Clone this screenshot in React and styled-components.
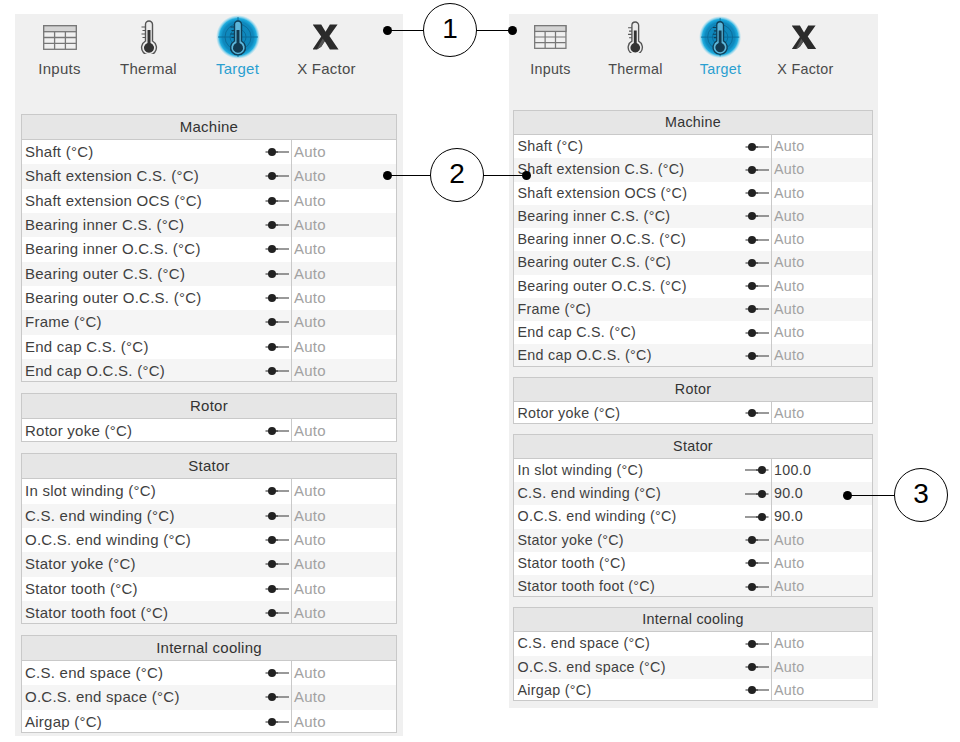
import React from 'react'
import styled, { createGlobalStyle } from 'styled-components'

const SECTIONS = [
  {
    title: 'Machine',
    rows: ['Shaft (°C)', 'Shaft extension C.S. (°C)', 'Shaft extension OCS (°C)', 'Bearing inner C.S. (°C)', 'Bearing inner O.C.S. (°C)', 'Bearing outer C.S. (°C)', 'Bearing outer O.C.S. (°C)', 'Frame (°C)', 'End cap C.S. (°C)', 'End cap O.C.S. (°C)'],
  },
  { title: 'Rotor', rows: ['Rotor yoke (°C)'] },
  {
    title: 'Stator',
    rows: ['In slot winding (°C)', 'C.S. end winding (°C)', 'O.C.S. end winding (°C)', 'Stator yoke (°C)', 'Stator tooth (°C)', 'Stator tooth foot (°C)'],
  },
  { title: 'Internal cooling', rows: ['C.S. end space (°C)', 'O.C.S. end space (°C)', 'Airgap (°C)'] },
]

const LARGE = { panelWidth: 388, tab: 89, tabsHeight: 100, sideL: 6, sideR: 6, gap: 10.8, header: 24, row: 24.33, font: 15, spacing: 0.25, valueCol: 105, bottom: 3, tabsShift: 0, iconScale: 1, labelPad: 3 }
const SMALL = { panelWidth: 369, tab: 85, tabsHeight: 96, sideL: 4, sideR: 5, gap: 10, header: 23, row: 23.25, font: 14.3, spacing: 0.28, valueCol: 101, bottom: 7, tabsShift: -1, iconScale: 0.96, labelPad: 3.5 }

const OVERRIDES = { 'In slot winding (°C)': '100.0', 'C.S. end winding (°C)': '90.0', 'O.C.S. end winding (°C)': '90.0' }

const GlobalStyle = createGlobalStyle`
  html, body {
    margin: 0;
    background: #fff;
  }
  body {
    font-family: "Liberation Sans", Arial, sans-serif;
    color: #333;
  }
`

const Page = styled.div`
  position: relative;
  display: flex;
  align-items: flex-start;
  gap: 106px;
  width: 960px;
  height: 742px;
  padding: 14px 0 0 15px;
  box-sizing: border-box;
  overflow: hidden;
`

const Panel = styled.div`
  width: ${(p) => p.$m.panelWidth}px;
  padding: 0 ${(p) => p.$m.sideR}px ${(p) => p.$m.bottom}px ${(p) => p.$m.sideL}px;
  box-sizing: border-box;
  background: #f0f0f0;
  font-size: ${(p) => p.$m.font}px;
  letter-spacing: ${(p) => p.$m.spacing}px;
`

const Tabs = styled.div`
  display: flex;
  height: ${(p) => p.$m.tabsHeight}px;
  margin-left: ${(p) => p.$m.tabsShift - p.$m.sideL}px;
`

const Tab = styled.div`
  width: ${(p) => p.$m.tab}px;
  display: flex;
  flex-direction: column;
  align-items: center;
  color: ${(p) => (p.$active ? '#2a9fd0' : '#4a4a4a')};
`

const TabIcon = styled.div`
  height: 46px;
  display: flex;
  align-items: center;
  justify-content: center;
`

const TabLabel = styled.div`
  line-height: 18px;
  white-space: nowrap;
`

const Sections = styled.div`
  display: flex;
  flex-direction: column;
  gap: ${(p) => p.$m.gap}px;
`

const Table = styled.div`
  border: 1px solid #c9c9c9;
  background: #fff;
`

const TableHeader = styled.div`
  height: ${(p) => p.$m.header}px;
  line-height: ${(p) => p.$m.header}px;
  background: #e6e6e6;
  border-bottom: 1px solid #c9c9c9;
  text-align: center;
  color: #333;
`

const Row = styled.div`
  display: grid;
  grid-template-columns: 1fr ${(p) => p.$m.valueCol}px;
  height: ${(p) => p.$m.row}px;
  line-height: ${(p) => p.$m.row}px;
  overflow: hidden;
  background: ${(p) => (p.$odd ? '#f5f5f5' : '#fff')};

  &:last-child {
    height: ${(p) => p.$m.row - 2}px;
  }
`

const RowLabel = styled.div`
  display: flex;
  align-items: center;
  justify-content: space-between;
  padding: 0 2px 2px ${(p) => p.$m.labelPad}px;
  box-sizing: border-box;
  color: #3f3f3f;
  white-space: nowrap;
`

const RowValue = styled.div`
  border-left: 1px solid #c9c9c9;
  padding-left: 2px;
  color: ${(p) => (p.$auto ? '#a2a2a2' : '#3f3f3f')};
`

// numbered call-outs lie over the panels
const Callout = styled.div`
  position: absolute;
  left: ${(p) => p.$left}px;
  top: ${(p) => p.$top}px;
  width: ${(p) => p.$width}px;
  height: 54px;
  display: flex;
  align-items: center;
`

const Dot = styled.div`
  flex: none;
  width: 9px;
  height: 9px;
  border-radius: 50%;
  background: #000;
`

const Leader = styled.div`
  flex: 1;
  height: 1px;
  margin: 0 -1px;
  background: #000;
`

const Bubble = styled.div`
  flex: none;
  width: 54px;
  height: 54px;
  box-sizing: border-box;
  border: 1px solid #000;
  border-radius: 50%;
  background: #fff;
  color: #000;
  font-size: 28px;
  line-height: 50px;
  text-align: center;
`

const TableIcon = ({ scale }) => (
  <svg width={34 * scale} height={25 * scale} viewBox="0 0 34 25" fill="none" stroke="#777" strokeWidth="1.3">
    <rect x="0.7" y="0.7" width="32.6" height="23.6" fill="#f0f0f0" />
    <rect x="0.7" y="0.7" width="32.6" height="6" fill="#d4d4d4" />
    <path d="M1 12.5H33M1 18.4H33M11.6 6.7V24M22.4 6.7V24" />
  </svg>
)

const ThermoShape = ({ dark = '#333', line = '#555', glass = 'none' }) => (
  <>
    <path d="M14.5 4.5a3.5 3.5 0 0 1 7 0V21a7.4 7.4 0 1 1-7 0Z" fill={glass} stroke={line} strokeWidth="1.4" />
    <path d="M16.5 10h3v13a5 5 0 1 1-3 0Z" fill={dark} />
    <path d="M14.5 7H10.5M14.5 10.5H11.5M14.5 14H10.5M14.5 17.5H11.5" stroke={line} strokeWidth="1.2" fill="none" />
  </>
)

const ThermalIcon = ({ scale }) => (
  <svg width={36 * scale} height={34 * scale} viewBox="0 0 36 34">
    <ThermoShape glass="#ececec" />
  </svg>
)

const TargetIcon = ({ scale }) => (
  <svg width={44 * scale} height={44 * scale} viewBox="-4 -5 44 44">
    <defs>
      <radialGradient id="halo">
        <stop offset="0.7" stopColor="#0e88bd" />
        <stop offset="0.84" stopColor="#1faddf" />
        <stop offset="1" stopColor="#7fd6f2" stopOpacity="0" />
      </radialGradient>
    </defs>
    <circle cx="18" cy="17" r="22" fill="url(#halo)" />
    <g fill="none" stroke="#0b6a95" strokeWidth="0.9">
      <circle cx="18" cy="17" r="8" />
      <circle cx="18" cy="17" r="13" />
      <path d="M-2 17H38M18 -3V37" />
    </g>
    <ThermoShape dark="#123a50" line="#0f3f58" glass="#5cb6da" />
  </svg>
)

const XIcon = ({ scale }) => (
  <svg width={28 * scale} height={26 * scale} viewBox="1.5 0 28 27">
    <path d="M0.5 0.5H9.5L14 8L18.5 0.5H26.5L18 12.5L27.5 26.5H18.5L13.2 18L9.5 23.5L5 26.5H0.5L9.5 13Z" fill="#2b2b2b" />
    <path d="M13.2 18L9.5 23.5L5 26.5L11 15Z" fill="#555" />
  </svg>
)

const Slider = ({ on }) => (
  <svg width="24" height="10" viewBox="0 0 24 10">
    <g transform={on ? 'matrix(-1 0 0 1 24 0)' : undefined}>
      <path d="M7 5H24" stroke="#555" strokeWidth="1.2" />
      <path d="M0.5 5H13" stroke="#222" strokeWidth="1" />
      <circle cx="7" cy="5" r="4" fill="#222" />
    </g>
  </svg>
)

const TABS = [
  { label: 'Inputs', Icon: TableIcon },
  { label: 'Thermal', Icon: ThermalIcon },
  { label: 'Target', Icon: TargetIcon, active: true },
  { label: 'X Factor', Icon: XIcon },
]

const TargetPanel = ({ metrics, values = {} }) => (
  <Panel $m={metrics}>
    <Tabs $m={metrics}>
      {TABS.map(({ label, Icon, active }) => (
        <Tab key={label} $m={metrics} $active={active}>
          <TabIcon>
            <Icon scale={metrics.iconScale} />
          </TabIcon>
          <TabLabel>{label}</TabLabel>
        </Tab>
      ))}
    </Tabs>
    <Sections $m={metrics}>
      {SECTIONS.map((section) => (
        <Table key={section.title}>
          <TableHeader $m={metrics}>{section.title}</TableHeader>
          {section.rows.map((name, i) => (
            <Row key={name} $m={metrics} $odd={i % 2 === 1}>
              <RowLabel $m={metrics}>
                <span>{name}</span>
                <Slider on={Boolean(values[name])} />
              </RowLabel>
              <RowValue $auto={!values[name]}>{values[name] || 'Auto'}</RowValue>
            </Row>
          ))}
        </Table>
      ))}
    </Sections>
  </Panel>
)

export default function App() {
  return (
    <>
      <GlobalStyle />
      <Page>
        <TargetPanel metrics={LARGE} />
        <TargetPanel metrics={SMALL} values={OVERRIDES} />

        <Callout $left={383} $top={3} $width={134}>
          <Dot />
          <Leader />
          <Bubble>1</Bubble>
          <Leader />
          <Dot />
        </Callout>
        <Callout $left={383} $top={148} $width={148}>
          <Dot />
          <Leader />
          <Bubble>2</Bubble>
          <Leader />
          <Dot />
        </Callout>
        <Callout $left={843} $top={468} $width={105}>
          <Dot />
          <Leader />
          <Bubble>3</Bubble>
        </Callout>
      </Page>
    </>
  )
}
